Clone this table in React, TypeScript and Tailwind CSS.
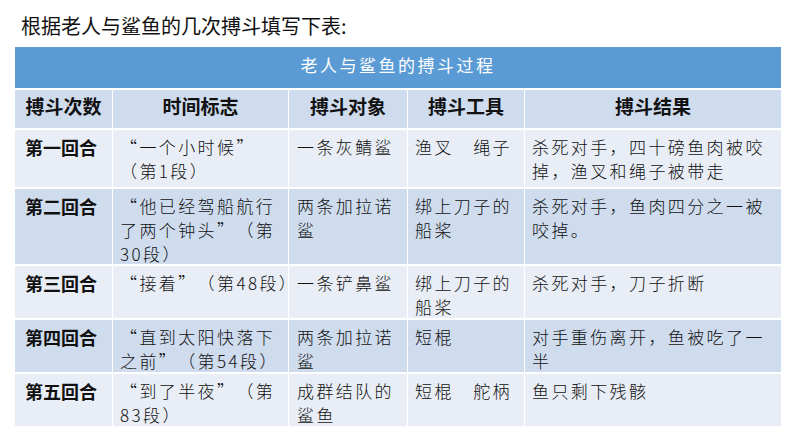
const rows: Array<{ label: string; time: string[]; target: string[]; tool: string[]; result: string[] }> = [
  {
    label: '第一回合',
    time: ['“一个小时候”', '（第1段）'],
    target: ['一条灰鲭鲨'],
    tool: ['渔叉　绳子'],
    result: ['杀死对手，四十磅鱼肉被咬', '掉，渔叉和绳子被带走'],
  },
  {
    label: '第二回合',
    time: ['“他已经驾船航行', '了两个钟头”（第', '30段）'],
    target: ['两条加拉诺', '鲨'],
    tool: ['绑上刀子的', '船桨'],
    result: ['杀死对手，鱼肉四分之一被', '咬掉。'],
  },
  {
    label: '第三回合',
    time: ['“接着”（第48段）'],
    target: ['一条铲鼻鲨'],
    tool: ['绑上刀子的', '船桨'],
    result: ['杀死对手，刀子折断'],
  },
  {
    label: '第四回合',
    time: ['“直到太阳快落下', '之前”（第54段）'],
    target: ['两条加拉诺', '鲨'],
    tool: ['短棍'],
    result: ['对手重伤离开，鱼被吃了一', '半'],
  },
  {
    label: '第五回合',
    time: ['“到了半夜”（第', '83段）'],
    target: ['成群结队的', '鲨鱼'],
    tool: ['短棍　舵柄'],
    result: ['鱼只剩下残骸'],
  },
]

const headers = ['搏斗次数', '时间标志', '搏斗对象', '搏斗工具', '搏斗结果']

// the slide font sets quotes full-width; give each one a full em box
function Line({ text }: { text: string }) {
  const parts = text.split(/([“”])/)
  return (
    <div className="whitespace-nowrap">
      {parts.map((p, i) =>
        p === '“' ? (
          <span key={i} className="inline-block w-[17px] text-right mr-[2.4px]">
            {p}
          </span>
        ) : p === '”' ? (
          <span key={i} className="inline-block w-[17px] text-left mr-[2.4px]">
            {p}
          </span>
        ) : (
          <span key={i}>{p}</span>
        )
      )}
    </div>
  )
}

function Cell({ lines, bg, pad }: { lines: string[]; bg: string; pad: string }) {
  return (
    <div className={`${bg} ${pad} pt-[5px] text-[17px] leading-[24px] tracking-[2.4px] font-light`}>
      {lines.map((l, i) => (
        <Line key={i} text={l} />
      ))}
    </div>
  )
}

export default function App() {
  return (
    <div
      className="w-[794px] h-[447px] bg-white overflow-hidden text-[#111]"
      style={{ fontFamily: '"Noto Sans CJK SC", "Noto Sans", sans-serif' }}
    >
      <div className="pt-[12px] pl-[21px] h-[47px] text-[20px] leading-[28px]">根据老人与鲨鱼的几次搏斗填写下表:</div>

      <div className="ml-[15px] w-[766px]">
        <div className="h-[41px] mb-[2px] bg-[#5b9bd5] flex justify-center pt-[6px] text-white text-[17px] leading-[24px] tracking-[2.5px]">
          老人与鲨鱼的搏斗过程
        </div>

        <div className="grid grid-cols-[97px_175px_118px_116px_256px] grid-rows-[38px_57px_75px_52px_52px_52px] gap-x-px gap-y-[2px] bg-white">
          {headers.map((h) => (
            <div key={h} className="bg-[#cfdcee] text-center font-bold text-[19px] leading-[26px] pt-[3px]">
              {h}
            </div>
          ))}

          {rows.map((r, i) => {
            const bg = i % 2 === 0 ? 'bg-[#e9eef6]' : 'bg-[#cfdcee]'
            return [
              <div key={`${i}a`} className={`${bg} pl-[10px] pt-[5px] font-bold text-[18px] leading-[24px]`}>
                {r.label}
              </div>,
              <Cell key={`${i}b`} lines={r.time} bg={bg} pad="pl-[7px]" />,
              <Cell key={`${i}c`} lines={r.target} bg={bg} pad="pl-[8px]" />,
              <Cell key={`${i}d`} lines={r.tool} bg={bg} pad="pl-[7px]" />,
              <Cell key={`${i}e`} lines={r.result} bg={bg} pad="pl-[7px]" />,
            ]
          })}
        </div>
      </div>
    </div>
  )
}
